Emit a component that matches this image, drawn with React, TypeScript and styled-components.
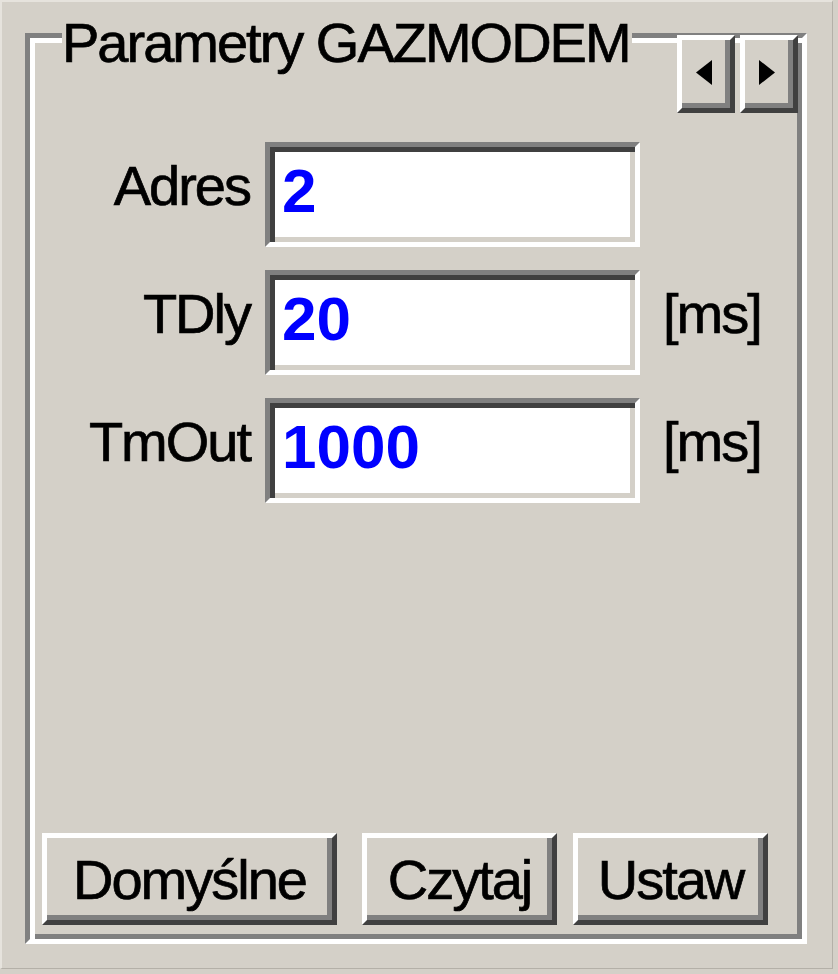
import React from "react";
import styled, { createGlobalStyle } from "styled-components";

const Global = createGlobalStyle`
  html, body {
    margin: 0;
    padding: 0;
    background: #d4d0c8;
  }
  body {
    font-family: "Liberation Sans", Arial, sans-serif;
  }
`;

const Page = styled.div`
  width: 838px;
  height: 974px;
  background: #d4d0c8;
  position: relative;
  overflow: hidden;
`;

const Frame = styled.div`
  box-sizing: border-box;
  width: 833px;
  height: 969px;
  border-style: solid;
  border-width: 2px 1px 1px 2px;
  border-color: #e6e3dd #b4b0a8 #b4b0a8 #e6e3dd;
  padding: 31px 0 0 23px;
`;

const GroupBox = styled.div`
  position: relative;
  box-sizing: border-box;
  width: 782px;
  height: 911px;
  border: 5px solid;
  border-color: #808080 #ffffff #ffffff #808080;
  box-shadow: inset 5px 5px 0 #ffffff, inset -5px -5px 0 #808080;
  padding: 104px 0 14px 0;
  display: flex;
  flex-direction: column;
`;

const Legend = styled.div`
  position: absolute;
  top: -27px;
  left: 32px;
  padding: 0 2px 0 0;
  background: #d4d0c8;
  font-size: 56px;
  line-height: 64px;
  letter-spacing: -2px;
  -webkit-text-stroke: 0.7px #000;
  color: #000;
  white-space: nowrap;
`;

const FieldGrid = styled.div`
  display: grid;
  grid-template-columns: 220px 375px auto;
  column-gap: 15px;
  row-gap: 23px;
  align-items: start;
`;

const Label = styled.div`
  text-align: right;
  font-size: 56px;
  line-height: 64px;
  letter-spacing: -2px;
  -webkit-text-stroke: 0.7px #000;
  padding-top: 12px;
  color: #000;
  white-space: nowrap;
`;

const Unit = styled(Label)`
  text-align: left;
  margin-left: 8px;
`;

const Edit = styled.input`
  box-sizing: border-box;
  width: 375px;
  height: 105px;
  margin: 0;
  border: 5px solid;
  border-color: #808080 #ffffff #ffffff #808080;
  box-shadow: inset 5px 5px 0 #404040, inset -5px -5px 0 #d4d0c8;
  background: #ffffff;
  padding: 0 0 8px 12px;
  font-family: "Liberation Sans", Arial, sans-serif;
  font-weight: bold;
  font-size: 62px;
  color: #0000ff;
  outline: none;
`;

const Spacer = styled.div`
  flex: 1;
`;

const ButtonRow = styled.div`
  display: flex;
  align-items: flex-end;
  padding-left: 12px;
`;

const Button = styled.button<{ $w: number; $gap: number }>`
  box-sizing: border-box;
  width: ${(p) => p.$w}px;
  height: 92px;
  margin: 0 0 0 ${(p) => p.$gap}px;
  border: 5px solid;
  border-color: #ffffff #404040 #404040 #ffffff;
  box-shadow: inset -5px -5px 0 #808080;
  background: #d4d0c8;
  padding: 2px 0 0 0;
  font-family: "Liberation Sans", Arial, sans-serif;
  font-size: 56px;
  line-height: 64px;
  letter-spacing: -2px;
  -webkit-text-stroke: 0.7px #000;
  color: #000;
  cursor: default;
`;

const ScrollPair = styled.div`
  position: absolute;
  top: 35px;
  left: 677px;
  display: flex;
  gap: 5px;
`;

const ArrowButton = styled.div`
  box-sizing: border-box;
  width: 58px;
  height: 78px;
  border: 5px solid;
  border-color: #ffffff #404040 #404040 #ffffff;
  box-shadow: inset -5px -5px 0 #808080;
  background: #d4d0c8;
  display: flex;
  align-items: center;
  justify-content: center;
  padding: 0 4px 4px 0;
`;

const Arrow = ({ dir }: { dir: "left" | "right" }) => (
  <svg width="16" height="25" viewBox="0 0 16 25">
    {dir === "left" ? (
      <polygon points="16,0 16,25 0,12.5" fill="#000" />
    ) : (
      <polygon points="0,0 0,25 16,12.5" fill="#000" />
    )}
  </svg>
);

const fields = [
  { label: "Adres", value: "2", unit: "" },
  { label: "TDly", value: "20", unit: "[ms]" },
  { label: "TmOut", value: "1000", unit: "[ms]" },
];

export default function App() {
  return (
    <Page>
      <Global />
      <Frame>
        <GroupBox>
          <Legend>Parametry GAZMODEM</Legend>
          <FieldGrid>
            {fields.map((f) => (
              <React.Fragment key={f.label}>
                <Label>{f.label}</Label>
                <Edit readOnly defaultValue={f.value} />
                <Unit>{f.unit}</Unit>
              </React.Fragment>
            ))}
          </FieldGrid>
          <Spacer />
          <ButtonRow>
            <Button $w={295} $gap={0}>Domyślne</Button>
            <Button $w={195} $gap={25}>Czytaj</Button>
            <Button $w={195} $gap={16}>Ustaw</Button>
          </ButtonRow>
        </GroupBox>
      </Frame>
      <ScrollPair>
        <ArrowButton>
          <Arrow dir="left" />
        </ArrowButton>
        <ArrowButton>
          <Arrow dir="right" />
        </ArrowButton>
      </ScrollPair>
    </Page>
  );
}
